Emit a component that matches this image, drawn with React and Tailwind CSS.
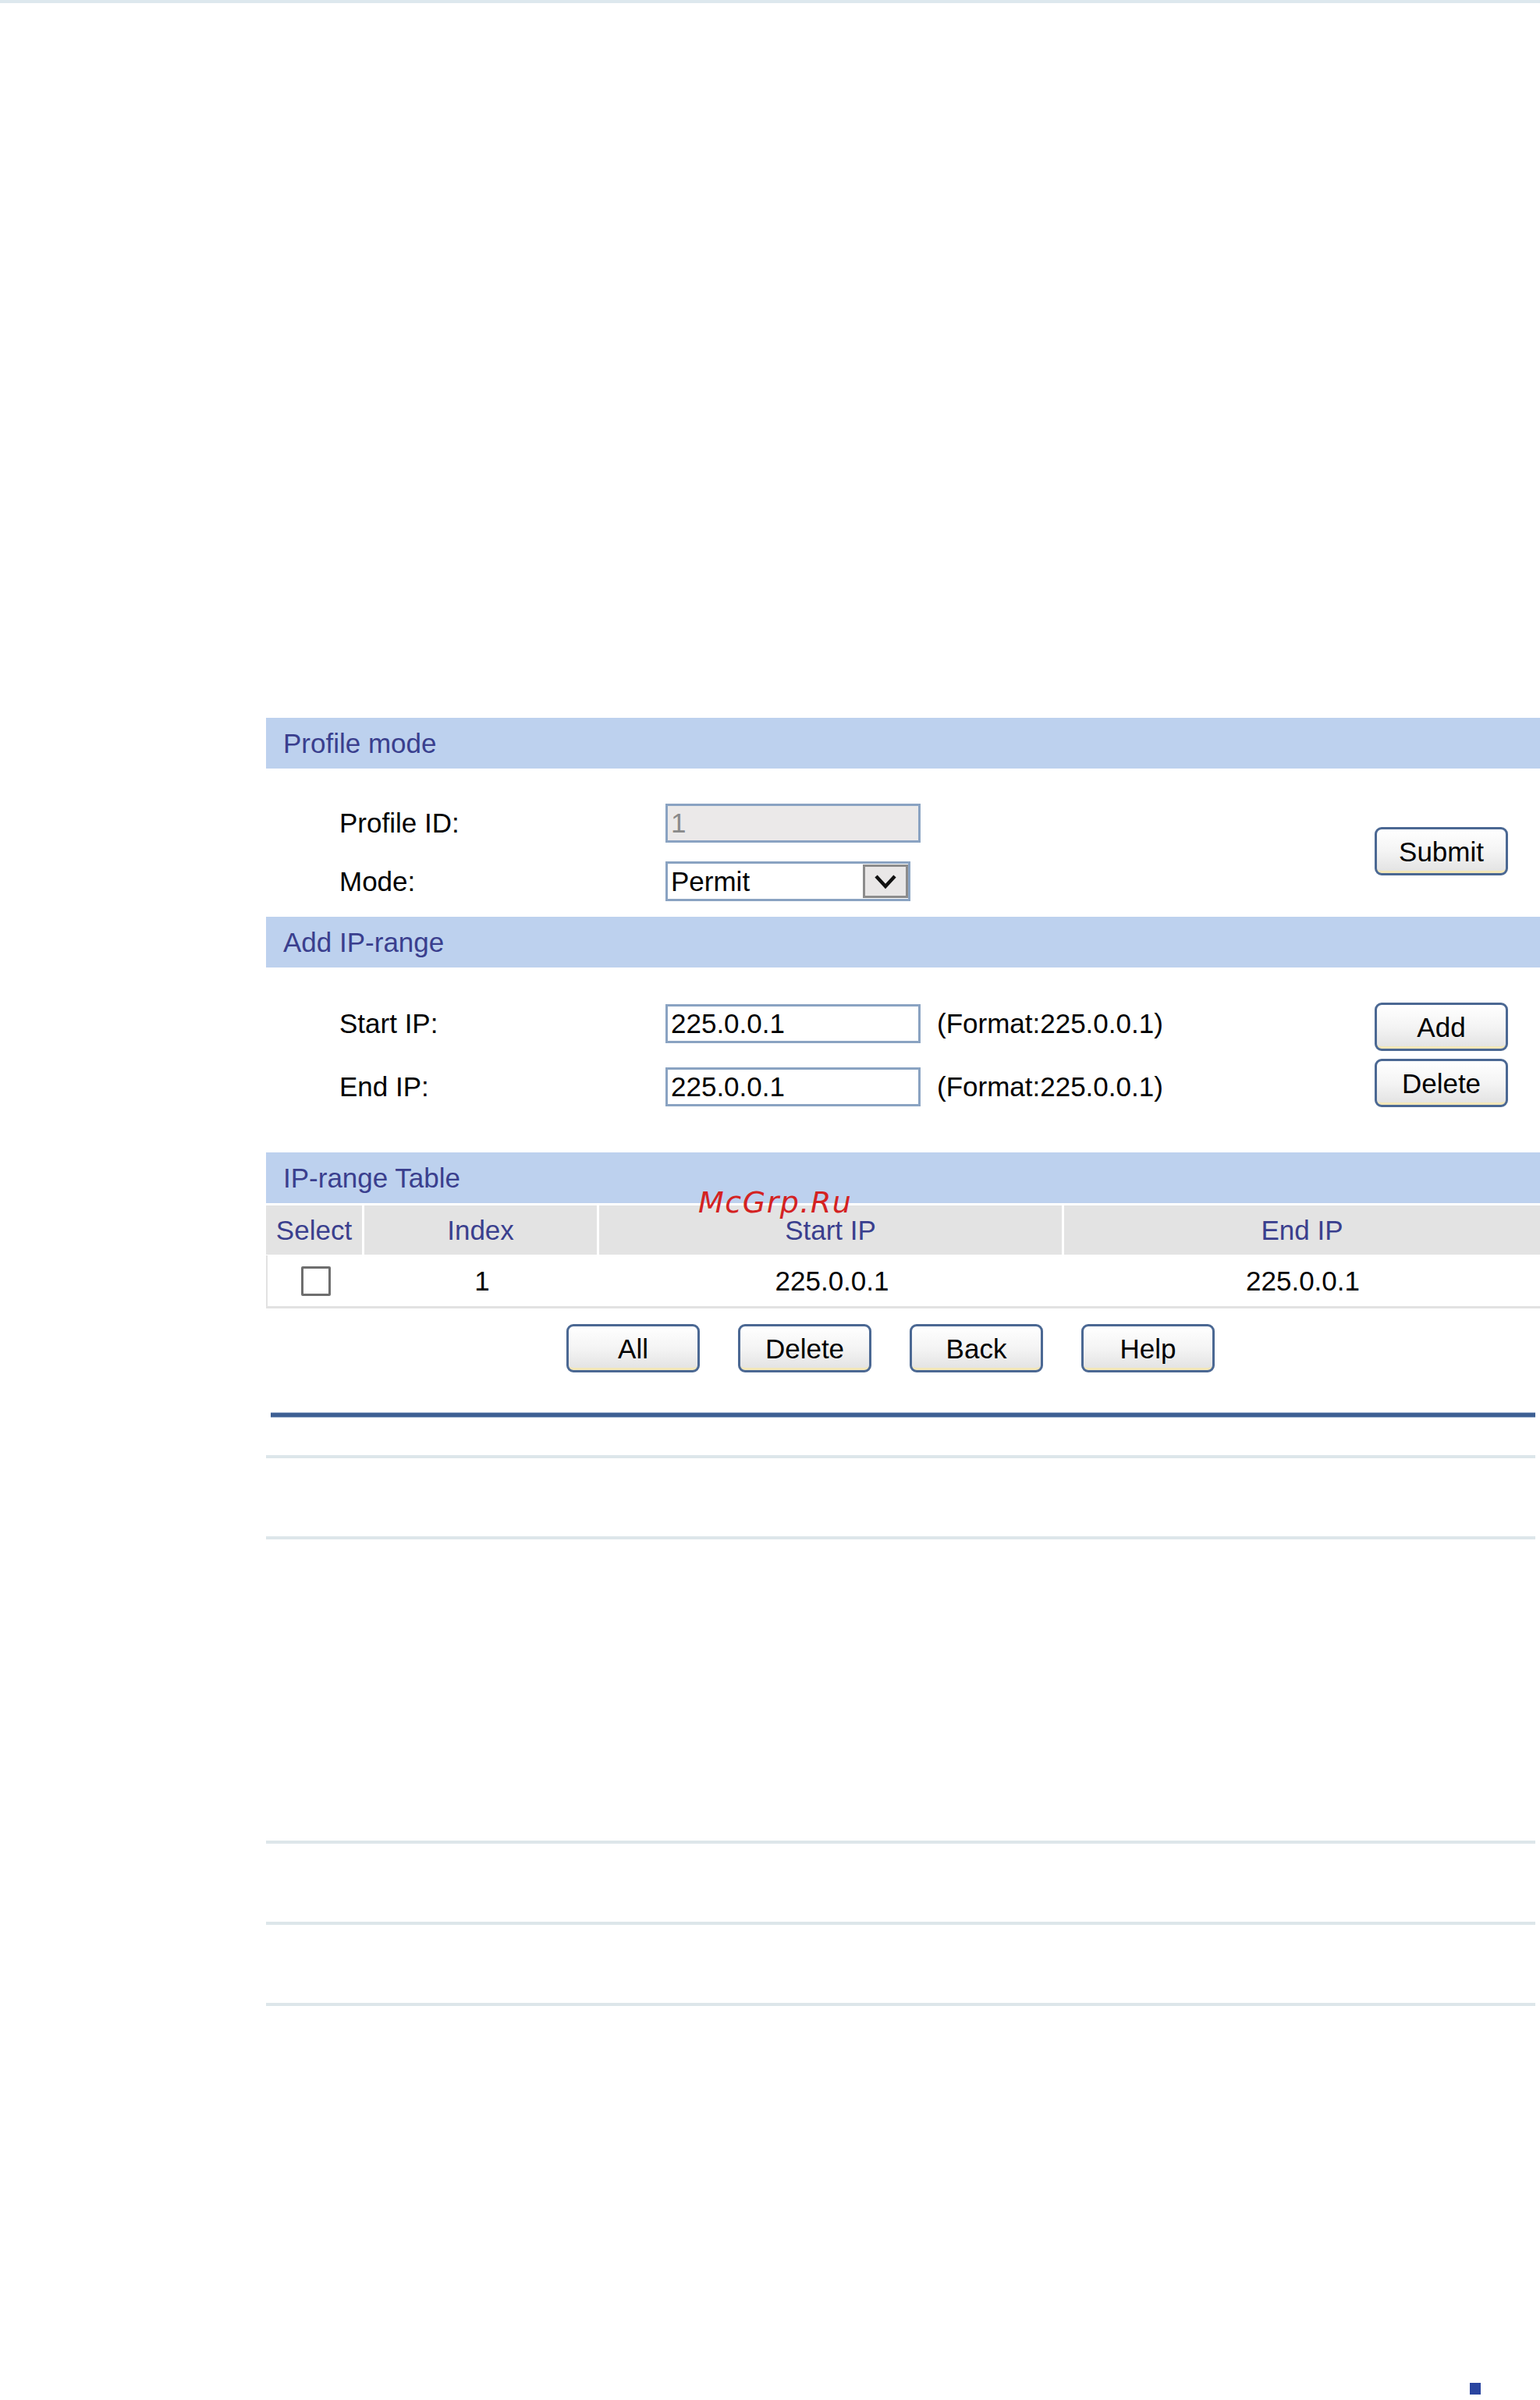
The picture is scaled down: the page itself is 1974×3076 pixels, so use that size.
import React from 'react';

const FONT = { fontFamily: '"Liberation Sans", Arial, sans-serif' };

function Bar({ children }) {
  return (
    <div className="h-[65px] bg-[#bdd1ee] flex items-center pl-[22px] text-[#3a3f8e]">
      {children}
    </div>
  );
}

function Btn({ children }) {
  return (
    <button
      type="button"
      className="relative w-[171px] h-[62px] rounded-[9px] border-[3px] border-[#4b6893] bg-gradient-to-b from-white via-[#f4f4f4] to-[#e2e2e2] text-[35px] text-black leading-none shadow-[inset_0_-8px_0_-5px_#f3e7b8]"
    >
      {children}
    </button>
  );
}

function TextBox({ value, disabled }) {
  return (
    <input
      type="text"
      readOnly
      value={value}
      className={`w-[327px] h-[50px] border-[3px] border-[#8aa3c2] pl-[4px] text-[35px] outline-none ${
        disabled ? 'bg-[#ebe9e9] text-[#8a8a8a]' : 'bg-white text-black'
      }`}
    />
  );
}

function Row({ label, children }) {
  return (
    <div className="flex items-center">
      <span className="w-[512px] pl-[94px] text-black">{label}</span>
      {children}
    </div>
  );
}

export default function App() {
  const cols = ['Select', 'Index', 'Start IP', 'End IP'];

  return (
    <div className="min-h-[3076px] bg-white text-[35px] leading-tight" style={FONT}>
      <div className="h-[4px] bg-[#dde8ee]" />

      <div className="ml-[341px] pt-[916px] relative">
        {/* Profile mode */}
        <Bar>Profile mode</Bar>
        <div className="h-[190px] flex items-start">
          <div className="pt-[45px] flex flex-col gap-[24px]">
            <Row label="Profile ID:">
              <TextBox value="1" disabled />
            </Row>
            <Row label="Mode:">
              <div className="w-[314px] h-[51px] border-[3px] border-[#8aa3c2] bg-white flex items-stretch">
                <span className="flex-1 flex items-center pl-[4px] text-black">Permit</span>
                <span className="w-[58px] my-[1px] bg-[#e9e7e7] border-[3px] border-[#8c8c8c] flex items-center justify-center">
                  <svg width="30" height="20" viewBox="0 0 30 20">
                    <path d="M3 3 L15 16 L27 3" fill="none" stroke="#111" strokeWidth="4.5" strokeLinejoin="miter" />
                  </svg>
                </span>
              </div>
            </Row>
          </div>
          <div className="ml-auto mr-[41px] mt-[75px]">
            <Btn>Submit</Btn>
          </div>
        </div>

        {/* Add IP-range */}
        <Bar>Add IP-range</Bar>
        <div className="h-[237px] flex items-start">
          <div className="pt-[47px] flex flex-col gap-[31px]">
            <Row label="Start IP:">
              <TextBox value="225.0.0.1" />
              <span className="ml-[21px] text-black">(Format:225.0.0.1)</span>
            </Row>
            <Row label="End IP:">
              <TextBox value="225.0.0.1" />
              <span className="ml-[21px] text-black">(Format:225.0.0.1)</span>
            </Row>
          </div>
          <div className="ml-auto mr-[41px] pt-[45px] flex flex-col gap-[10px]">
            <Btn>Add</Btn>
            <Btn>Delete</Btn>
          </div>
        </div>

        {/* IP-range Table */}
        <Bar>IP-range Table</Bar>
        <div className="mt-[3px] grid grid-cols-[123px_298px_593px_1fr] gap-x-[3px]">
          {cols.map((c) => (
            <div key={c} className="h-[63px] bg-[#e3e3e3] flex items-center justify-center text-[#3a3f8e]">
              {c}
            </div>
          ))}
        </div>
        <div className="grid grid-cols-[123px_298px_593px_1fr] gap-x-[3px] border-l-[2px] border-b-[3px] border-[#e2e2e2] mt-[1px]">
          <div className="h-[65px] flex items-center justify-center">
            <span className="w-[38px] h-[38px] border-[3px] border-[#6e6e6e] rounded-[2px] bg-white" />
          </div>
          <div className="h-[65px] flex items-center justify-center text-black">1</div>
          <div className="h-[65px] flex items-center justify-center text-black">225.0.0.1</div>
          <div className="h-[65px] flex items-center justify-center text-black">225.0.0.1</div>
        </div>

        <div className="mt-[20px] ml-[385px] flex gap-[49px]">
          <Btn>All</Btn>
          <Btn>Delete</Btn>
          <Btn>Back</Btn>
          <Btn>Help</Btn>
        </div>

        <div className="mt-[51px] ml-[6px] mr-[6px] h-[7px] bg-[#3d5f93] border-y border-[#9fb3d0]" />

        <div className="mr-[6px]">
          <div className="mt-[48px] h-[4px] bg-[#dde6ea]" />
          <div className="mt-[100px] h-[4px] bg-[#dde6ea]" />
          <div className="mt-[386px] h-[4px] bg-[#dde6ea]" />
          <div className="mt-[100px] h-[4px] bg-[#dde6ea]" />
          <div className="mt-[100px] h-[4px] bg-[#dde6ea]" />
        </div>

        {/* watermark over the table header */}
        <span
          className="absolute left-[554px] top-[1518px] text-[38px] italic tracking-[1.5px] text-[#d42222] leading-none"
          style={{ fontFamily: '"DejaVu Sans", sans-serif' }}
        >
          McGrp.Ru
        </span>
      </div>

      <div className="mt-[483px] ml-[1884px] w-[14px] h-[15px] bg-[#2a45a0]" />
    </div>
  );
}
